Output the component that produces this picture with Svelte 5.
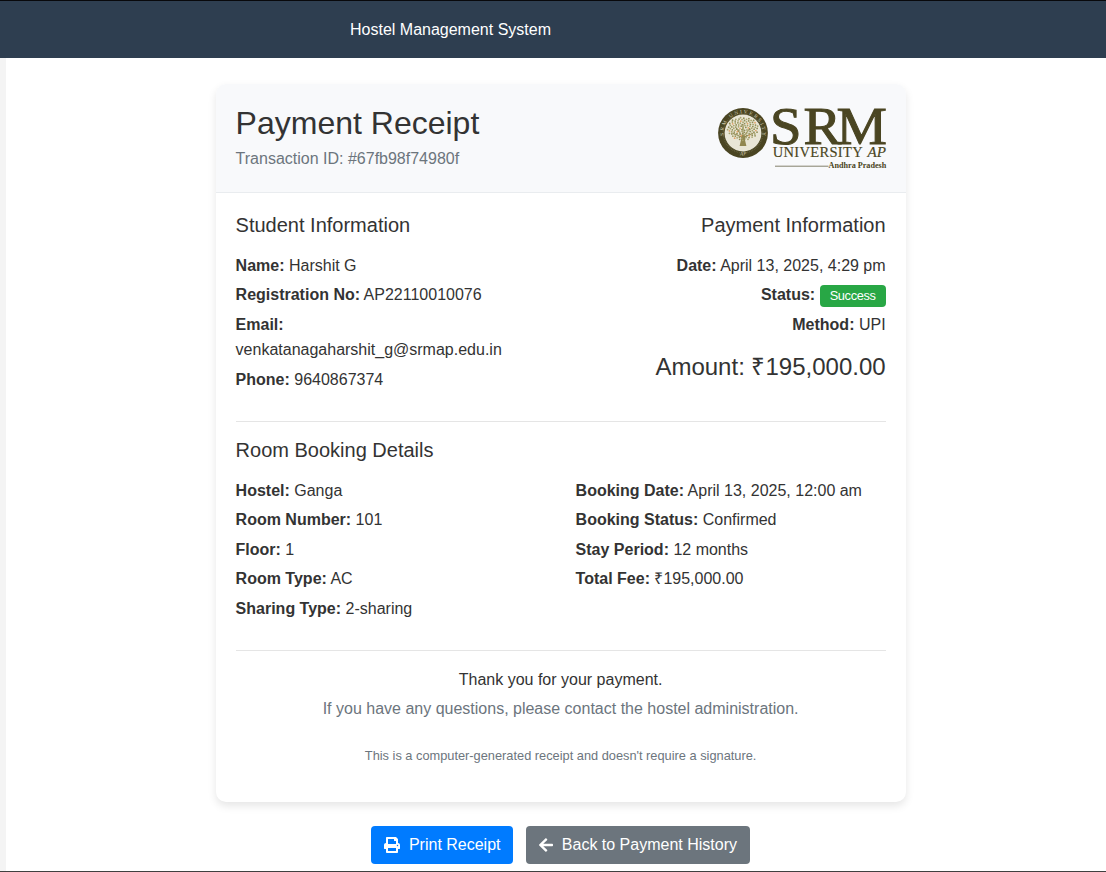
<script>
  const student = [
    ['Name:', 'Harshit G'],
    ['Registration No:', 'AP22110010076'],
    ['Email:', 'venkatanagaharshit_g@srmap.edu.in'],
    ['Phone:', '9640867374'],
  ];
  const room = [
    ['Hostel:', 'Ganga'],
    ['Room Number:', '101'],
    ['Floor:', '1'],
    ['Room Type:', 'AC'],
    ['Sharing Type:', '2-sharing'],
  ];
  const booking = [
    ['Booking Date:', 'April 13, 2025, 12:00 am'],
    ['Booking Status:', 'Confirmed'],
    ['Stay Period:', '12 months'],
    ['Total Fee:', '₹195,000.00'],
  ];
  // Foliage dots of the crest, laid out in a sunflower spiral
  const leaves = Array.from({ length: 110 }, (_, i) => {
    const a = i * 2.39996;
    const r = 1.5 * Math.sqrt(i);
    return { x: 25 + r * Math.cos(a), y: 22.8 + r * Math.sin(a) * 0.74, c: i % 9 === 4 ? '#e0a468' : i % 2 ? '#8f8d55' : '#a8a46c' };
  });
</script>

{#snippet row(label, value)}
  <p><strong>{label}</strong> {value}</p>
{/snippet}

<div class="page">
  <header class="topbar"><span>Hostel Management System</span></header>
  <main>
    <article class="card">
      <div class="head">
        <div>
          <h1>Payment Receipt</h1>
          <p class="muted">Transaction ID: #67fb98f74980f</p>
        </div>
        <svg class="logo" width="170" height="64" viewBox="0 0 170 64" role="img" aria-label="SRM University AP">
          <defs>
            <path id="ringTop" d="M6.6 33 A19.4 19.4 0 1 1 43.4 33" />
            <path id="ringBottom" d="M10 43.5 A22.3 22.3 0 0 0 40 43.5" />
          </defs>
          <circle cx="25" cy="27" r="24.9" fill="#4a4522" />
          <circle cx="25" cy="27" r="19.7" fill="none" stroke="#827d5c" stroke-width="1.6" stroke-dasharray=".6 1.1" opacity=".6" />
          <circle cx="25" cy="27" r="18.4" fill="#e9e6d6" />
          <text class="ring"><textPath href="#ringTop" startOffset="50%" text-anchor="middle" textLength="66">SRM UNIVERSITY</textPath></text>
          <text class="ring"><textPath href="#ringBottom" startOffset="50%" text-anchor="middle">AP</textPath></text>
          <path d="M23.6 37 23.6 31 14.5 27M26.4 37 26.4 31 35.5 27M25 36V18M24 30l-6-8M26 30l6-8" fill="none" stroke="#918750" stroke-width="1" />
          <path d="M21.6 40q2.2-6 1.2-11h4.4q-1 5 1.2 11z" fill="#918750" />
          {#each leaves as l}<circle cx={l.x} cy={l.y} r=".9" fill={l.c} />{/each}
          <g transform="translate(0 38.4) scale(1.06 1)">
            <text x="49.1 80.6 111.8" y="0" class="srm">SRM</text>
          </g>
          <text x="54.7" y="50.5" class="uni" textLength="90" lengthAdjust="spacing">UNIVERSITY</text>
          <text x="149.5" y="50.5" class="uni italic" textLength="18.5" lengthAdjust="spacingAndGlyphs">AP</text>
          <path d="M57 60.2H110.5" stroke="#77745b" stroke-width=".9" />
          <text x="110.5" y="61.9" class="state" textLength="57.8" lengthAdjust="spacingAndGlyphs">Andhra Pradesh</text>
        </svg>
      </div>

      <div class="body">
        <section class="cols">
          <div>
            <h2>Student Information</h2>
            {#each student as [label, value]}
              {@render row(label, value)}
            {/each}
          </div>
          <div class="right">
            <h2>Payment Information</h2>
            {@render row('Date:', 'April 13, 2025, 4:29 pm')}
            <p><strong>Status:</strong> <span class="badge">Success</span></p>
            {@render row('Method:', 'UPI')}
            <div class="amount">Amount: ₹195,000.00</div>
          </div>
        </section>
        <hr />
        <h2>Room Booking Details</h2>
        <section class="cols">
          <div>{#each room as [label, value]}{@render row(label, value)}{/each}</div>
          <div>{#each booking as [label, value]}{@render row(label, value)}{/each}</div>
        </section>
        <hr />
        <footer>
          <p>Thank you for your payment.</p>
          <p class="muted">If you have any questions, please contact the hostel administration.</p>
          <p class="small muted">This is a computer-generated receipt and doesn't require a signature.</p>
        </footer>
      </div>
    </article>

    <div class="actions">
      <button class="btn primary">
        <svg width="16" height="16" viewBox="0 0 512 512" fill="currentColor"><path d="M448 192V77.25c0-8.49-3.37-16.62-9.37-22.63L393.37 9.37c-6-6-14.14-9.37-22.63-9.37H96C78.33 0 64 14.33 64 32v160c-35.35 0-64 28.65-64 64v112c0 8.84 7.16 16 16 16h48v96c0 17.67 14.33 32 32 32h320c17.67 0 32-14.33 32-32v-96h48c8.84 0 16-7.16 16-16V256c0-35.35-28.65-64-64-64zm-64 256H128v-96h256v96zm0-224H128V64h192v48c0 8.84 7.16 16 16 16h48v96zm48 72c-13.25 0-24-10.75-24-24 0-13.26 10.75-24 24-24s24 10.74 24 24c0 13.25-10.75 24-24 24z" /></svg>
        <span>Print Receipt</span>
      </button>
      <button class="btn secondary">
        <svg width="14" height="16" viewBox="0 0 448 512" fill="currentColor"><path d="M257.5 445.1l-22.2 22.2c-9.4 9.4-24.6 9.4-33.9 0L7 273c-9.4-9.4-9.4-24.6 0-33.9L201.4 44.7c9.4-9.4 24.6-9.4 33.9 0l22.2 22.2c9.5 9.5 9.3 25-.4 34.3L136.6 216H424c13.3 0 24 10.7 24 24v32c0 13.3-10.7 24-24 24H136.6l120.5 114.8c9.8 9.3 10 24.8.4 34.3z" /></svg>
        <span>Back to Payment History</span>
      </button>
    </div>
  </main>
</div>

<style>
  :global(body) { margin: 0; background: #fff; }
  .page {
    box-sizing: border-box;
    height: 872px;
    overflow: hidden;
    display: flex;
    flex-direction: column;
    border-top: 1px solid #08080b;
    border-bottom: 1px solid #404040;
    font: 16px/25.6px "Liberation Sans", Arial, sans-serif;
    color: #333;
  }
  .topbar {
    flex: none;
    height: 57px;
    box-sizing: border-box;
    padding: 16px 0 0 350px;
    background: #2e3e50;
    color: #fff;
  }
  main { flex: 1; border-left: 6px solid #f4f4f4; padding: 26px 200.4px 0 209.6px; }
  .card {
    box-sizing: border-box;
    width: 690px;
    height: 718px;
    border-radius: 10px;
    overflow: hidden;
    box-shadow: 0 4px 8px rgba(0, 0, 0, .1);
    background: #fff;
  }
  .head {
    box-sizing: border-box;
    height: 108.6px;
    padding: 20px;
    display: flex;
    justify-content: space-between;
    background: #f8f9fb;
    border-bottom: 1px solid #e9ecef;
  }
  h1 { margin: 0 0 4px; font-size: 32px; line-height: 38.4px; font-weight: 400; }
  h2 { margin: 0 0 16px; font-size: 20px; line-height: 24px; font-weight: 400; }
  p { margin: 0 0 4px; }
  .head p { margin: 0; }
  .muted { color: #6c757d; }
  .logo { margin: 2px -2.5px 0 0; overflow: visible; }
  .logo text { font-family: "Liberation Serif", serif; fill: #4a4522; }
  .logo .srm { font-size: 53.5px; stroke: #4a4522; stroke-width: 1; }
  .logo .uni { font-size: 14.5px; stroke: #4a4522; stroke-width: .15; }
  .logo .italic { font-style: italic; }
  .logo .state { font-size: 7.4px; font-weight: 700; }
  .logo .ring { font-size: 5.2px; fill: #d0cbb0; }
  .body { padding: 20px 20px 0; }
  .cols { display: grid; grid-template-columns: 310px 310px; gap: 30px; }
  .right { text-align: right; }
  .badge {
    display: inline-block;
    box-sizing: border-box;
    width: 66px;
    height: 22px;
    border-radius: 4px;
    background: #28a745;
    color: #fff;
    font-size: 12.8px;
    letter-spacing: -.35px;
    line-height: 22px;
    text-align: center;
    vertical-align: top;
    margin-top: 2.5px;
  }
  .amount { margin-top: 10.5px; font-size: 24px; line-height: 38px; }
  hr { margin: 24px 0 16px; border: 0; border-top: 1px solid #e5e5e5; }
  footer { text-align: center; }
  .small { margin-top: 21.4px; font-size: 12.8px; }
  .actions { display: flex; justify-content: center; gap: 13px; margin-top: 24px; }
  .btn {
    display: flex;
    align-items: center;
    gap: 8.5px;
    height: 38px;
    padding: 0 12.8px 0 13px;
    border: 0;
    border-radius: 4px;
    color: #fff;
    font: inherit;
  }
  .primary { background: #007bff; }
  .secondary { background: #6c757d; }
</style>
